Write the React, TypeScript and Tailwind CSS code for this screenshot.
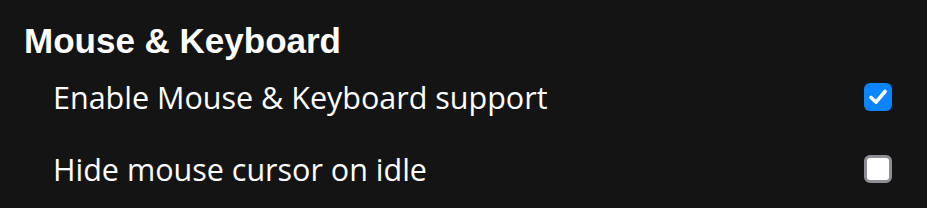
export default function App() {
  return (
    <div className="min-h-[208px] w-full bg-[#141414] pl-[24px] pr-[35px] pt-[21px] text-white">
      <h2 className="font-['Liberation_Sans',Arial,sans-serif] text-[35px] font-bold leading-[40px]">
        Mouse &amp; Keyboard
      </h2>
      <div className="mt-[11px] pl-[29px]">
        <div className="flex h-[50px] items-center justify-between">
          <span className="font-['Open_Sans',sans-serif] text-[30.5px] leading-none">
            Enable Mouse &amp; Keyboard support
          </span>
          <span className="flex h-[28px] w-[28px] items-center justify-center rounded-[6px] bg-[#0a84ff]">
            <svg width="22" height="22" viewBox="0 0 22 22" fill="none">
              <path d="M4 11.5 L9 16.2 L18 5.5" stroke="white" strokeWidth="3.6" strokeLinecap="round" strokeLinejoin="round" />
            </svg>
          </span>
        </div>
        <div className="mt-[22px] flex h-[50px] items-center justify-between">
          <span className="font-['Open_Sans',sans-serif] text-[30.5px] leading-none">
            Hide mouse cursor on idle
          </span>
          <span className="h-[28px] w-[28px] rounded-[6px] border-[3px] border-[#8e8e96] bg-white" />
        </div>
      </div>
    </div>
  );
}
